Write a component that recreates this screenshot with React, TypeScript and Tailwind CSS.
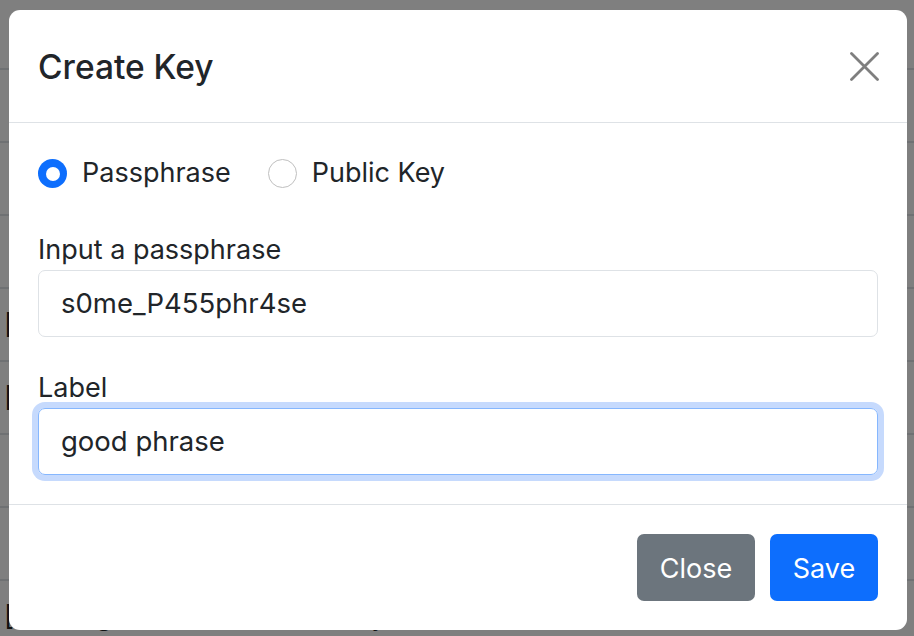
import React from "react";

// Rows of the page that sits behind the dimmed backdrop
const bgRows = [false, false, false, true, true, false, false, true];

function Radio({ checked }: { checked: boolean }) {
  return checked ? (
    <span className="flex h-[29px] w-[29px] shrink-0 items-center justify-center rounded-full bg-[#0d6efd]">
      <span className="h-[14px] w-[14px] rounded-full bg-white" />
    </span>
  ) : (
    <span className="h-[29px] w-[29px] shrink-0 rounded-full border border-[#bfbfbf] bg-white" />
  );
}

export default function App() {
  return (
    <div className="relative h-[636px] w-[914px] overflow-hidden bg-white font-['Inter','Noto_Sans',sans-serif] text-[#212529]">
      {/* page behind the modal */}
      <div className="flex flex-col">
        <div className="h-[70px] border-b-2 border-[#dee2e6]" />
        {bgRows.map((mark, i) => (
          <div key={i} className="flex h-[73px] items-center border-b-2 border-[#dee2e6] pl-[4px] text-[27px]">
            {mark && <span className="text-[#222]">[</span>}
            {i === 7 && (
              <span className="ml-[5px] flex gap-[230px]">
                <span>Testing</span>
                <span>key</span>
              </span>
            )}
          </div>
        ))}
      </div>

      <div className="absolute inset-0 bg-black/50" />

      {/* modal */}
      <div className="absolute inset-0 pl-[9px] pr-[7px] pt-[10px]">
        <div className="flex h-[620px] flex-col rounded-[11px] bg-white">
          <div className="flex h-[113px] items-center justify-between border-b border-[#dee2e6] pl-[29px] pr-[28px]">
            <h5 className="pt-[3px] text-[33.5px] font-medium leading-none">Create Key</h5>
            <svg width="29" height="29" viewBox="0 0 29 29" className="text-[#7f7f7f]">
              <path d="M1.5 1.5L27.5 27.5M27.5 1.5L1.5 27.5" stroke="currentColor" strokeWidth="2.8" strokeLinecap="round" />
            </svg>
          </div>

          <div className="flex flex-col border-b border-[#dee2e6] px-[29px] pb-[29px] pt-[29px] text-[27px]">
            <div className="flex h-[43px] items-center">
              <label className="flex items-center gap-[15px]">
                <Radio checked />
                <span>Passphrase</span>
              </label>
              <label className="ml-[37px] flex items-center gap-[15px]">
                <Radio checked={false} />
                <span>Public Key</span>
              </label>
            </div>

            <label className="mt-[35px] h-[40px] leading-[40px]">Input a passphrase</label>
            <div className="flex h-[67px] items-center rounded-[7px] border border-[#dee2e6] px-[22px] text-[27.5px]">
              s0me_P455phr4se
            </div>

            <label className="mt-[31px] h-[40px] leading-[40px]">Label</label>
            <div className="flex h-[67px] items-center rounded-[7px] border border-[#86b7fe] px-[22px] text-[27.5px] shadow-[0_0_0_6px_#c6dafd]">
              good phrase
            </div>
          </div>

          <div className="flex justify-end gap-[15px] px-[29px] pt-[29px] text-[27px] text-white">
            <button className="h-[67px] w-[118px] rounded-[7px] bg-[#6c757d] pt-[3px]">Close</button>
            <button className="h-[67px] w-[108px] rounded-[7px] bg-[#0d6efd] pt-[3px]">Save</button>
          </div>
        </div>
      </div>
    </div>
  );
}
